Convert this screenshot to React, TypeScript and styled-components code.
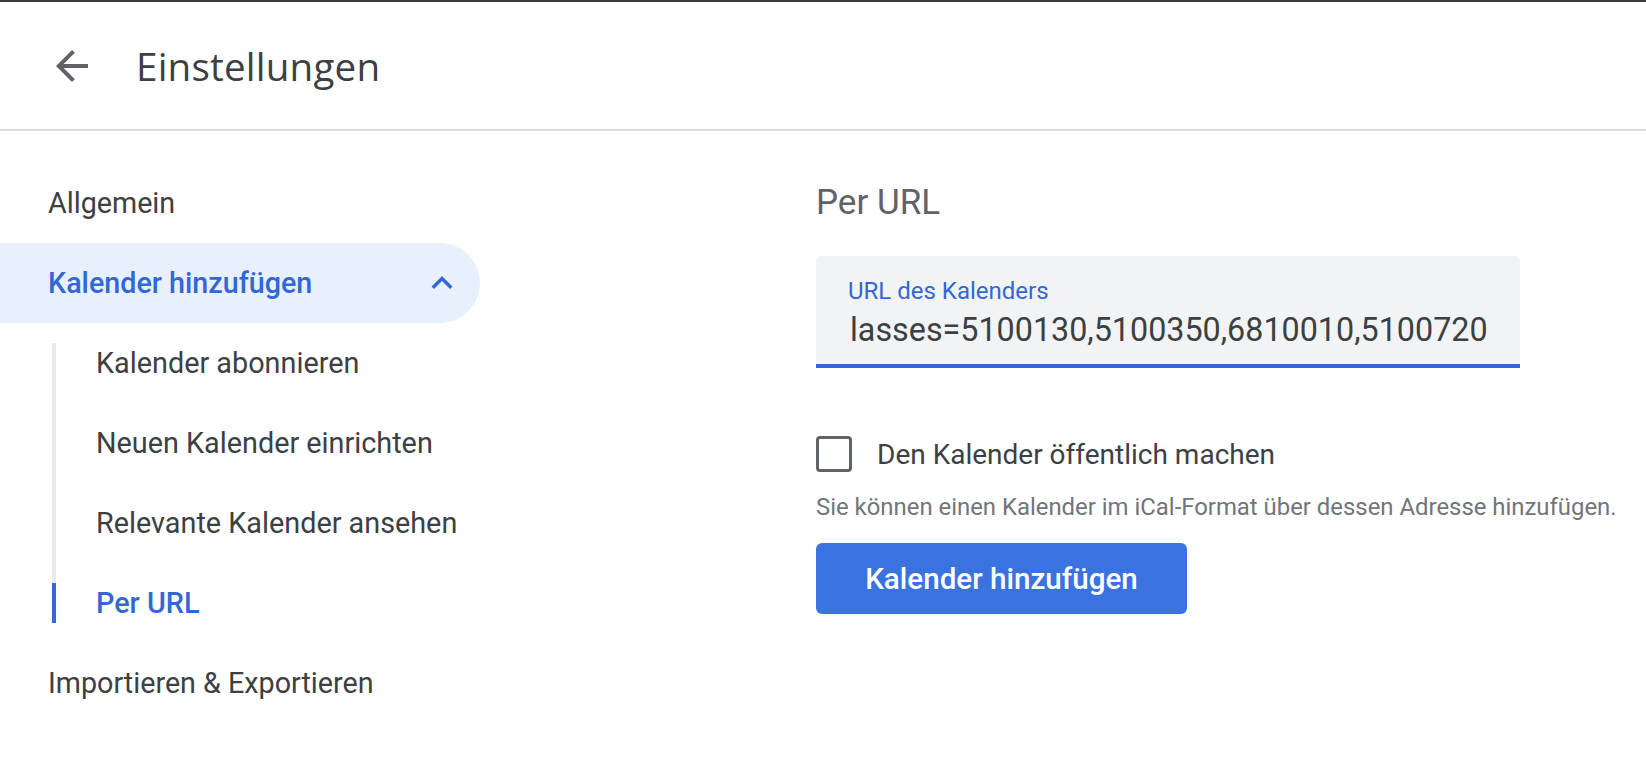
import styled, { createGlobalStyle } from "styled-components";

const GlobalStyle = createGlobalStyle`
    html, body {
        margin: 0;
        padding: 0;
        background: #fff;
        font-family: Roboto, "Liberation Sans", Arial, sans-serif;
        color: #3c4043;
    }
    * {
        box-sizing: border-box;
    }
`;

const Page = styled.div`
    width: 1646px;
    min-height: 768px;
    border-top: 2px solid #3c3c3c;
`;

const Header = styled.header`
    height: 129px;
    display: flex;
    align-items: center;
    padding-left: 48px;
    border-bottom: 2px solid #dadce0;
`;

const BackButton = styled.button`
    width: 48px;
    height: 48px;
    padding: 0;
    border: none;
    background: none;
    display: flex;
    align-items: center;
    justify-content: center;
    cursor: pointer;
`;

const Title = styled.h1`
    margin: 0 0 0 40px;
    font-family: "Open Sans", Roboto, sans-serif;
    font-size: 38.6px;
    font-weight: 400;
    color: #3c4043;
    letter-spacing: 0.2px;
`;

const Body = styled.div`
    display: flex;
`;

const Sidebar = styled.nav`
    width: 480px;
    padding-top: 32px;
    display: flex;
    flex-direction: column;
`;

const NavItem = styled.div<{ $active?: boolean }>`
    height: 80px;
    display: flex;
    align-items: center;
    justify-content: space-between;
    padding: 0 17px 0 48px;
    font-size: 28.7px;
    font-weight: ${(p) => (p.$active ? 500 : 400)};
    color: ${(p) => (p.$active ? "#3367d6" : "#3c4043")};
    background: ${(p) => (p.$active ? "#e8f0fe" : "transparent")};
    border-radius: 0 40px 40px 0;
`;

const SubList = styled.div`
    position: relative;
    display: flex;
    flex-direction: column;

    &::before {
        content: "";
        position: absolute;
        left: 52px;
        top: 20px;
        bottom: 20px;
        width: 4px;
        background: #e8eaed;
    }
`;

const SubItem = styled.div<{ $active?: boolean }>`
    position: relative;
    height: 80px;
    display: flex;
    align-items: center;
    padding-left: 96px;
    font-size: 28.8px;
    font-weight: ${(p) => (p.$active ? 500 : 400)};
    color: ${(p) => (p.$active ? "#3367d6" : "#3c4043")};

    &::before {
        content: "";
        display: ${(p) => (p.$active ? "block" : "none")};
        position: absolute;
        left: 52px;
        top: 20px;
        height: 40px;
        width: 4px;
        background: #3367d6;
    }
`;

const Main = styled.main`
    margin-left: 336px;
    padding-top: 51px;
    display: flex;
    flex-direction: column;
    width: 830px;
`;

const SectionTitle = styled.h2`
    margin: 0;
    font-size: 35px;
    line-height: 42px;
    font-weight: 400;
    color: #5f6368;
`;

const Field = styled.div`
    margin-top: 32px;
    width: 704px;
    height: 112px;
    background: #f1f3f4;
    border-radius: 6px 6px 0 0;
    border-bottom: 4px solid #3367d6;
    padding: 22px 32px 0 32px;
    display: flex;
    flex-direction: column;
`;

const FieldLabel = styled.label`
    font-size: 24px;
    line-height: 26px;
    color: #3367d6;
`;

const FieldValue = styled.div`
    margin: 6px 0 0 2px;
    font-size: 32.3px;
    line-height: 40px;
    color: #3c4043;
    white-space: nowrap;
    overflow: hidden;
`;

const CheckRow = styled.label`
    margin-top: 68px;
    display: flex;
    align-items: center;
    gap: 25px;
    font-size: 28px;
    color: #3c4043;
`;

const CheckBox = styled.span`
    width: 36px;
    height: 36px;
    border: 3.5px solid #5f6368;
    border-radius: 4px;
    flex-shrink: 0;
`;

const Hint = styled.p`
    margin: 20px 0 0;
    font-size: 23.9px;
    line-height: 30px;
    color: #70757a;
    white-space: nowrap;
`;

const PrimaryButton = styled.button`
    margin-top: 21px;
    width: 371px;
    height: 71px;
    border: none;
    border-radius: 6px;
    background: #3a73e0;
    color: #fff;
    font-family: Roboto, sans-serif;
    font-size: 29.6px;
    font-weight: 500;
    cursor: pointer;
`;

const BackArrow = () => (
    <svg width="48" height="48" viewBox="0 0 24 24" fill="#5f6368">
        <path d="M20 11H7.83l5.59-5.59L12 4l-8 8 8 8 1.41-1.41L7.83 13H20v-2z" />
    </svg>
);

const ChevronUp = () => (
    <svg width="42" height="42" viewBox="0 0 24 24" fill="#3367d6">
        <path d="M12 8l-6 6 1.41 1.41L12 10.83l4.59 4.58L18 14z" />
    </svg>
);

const subItems = [
    "Kalender abonnieren",
    "Neuen Kalender einrichten",
    "Relevante Kalender ansehen",
    "Per URL",
];

const App = () => {
    return (
        <Page>
            <GlobalStyle />
            <Header>
                <BackButton aria-label="Zurück">
                    <BackArrow />
                </BackButton>
                <Title>Einstellungen</Title>
            </Header>
            <Body>
                <Sidebar>
                    <NavItem>Allgemein</NavItem>
                    <NavItem $active>
                        <span>Kalender hinzufügen</span>
                        <ChevronUp />
                    </NavItem>
                    <SubList>
                        {subItems.map((item) => (
                            <SubItem key={item} $active={item === "Per URL"}>
                                {item}
                            </SubItem>
                        ))}
                    </SubList>
                    <NavItem>Importieren &amp; Exportieren</NavItem>
                </Sidebar>
                <Main>
                    <SectionTitle>Per URL</SectionTitle>
                    <Field>
                        <FieldLabel>URL des Kalenders</FieldLabel>
                        <FieldValue>lasses=5100130,5100350,6810010,5100720</FieldValue>
                    </Field>
                    <CheckRow>
                        <CheckBox />
                        Den Kalender öffentlich machen
                    </CheckRow>
                    <Hint>
                        Sie können einen Kalender im iCal-Format über dessen Adresse hinzufügen.
                    </Hint>
                    <PrimaryButton>Kalender hinzufügen</PrimaryButton>
                </Main>
            </Body>
        </Page>
    );
};

export default App;
